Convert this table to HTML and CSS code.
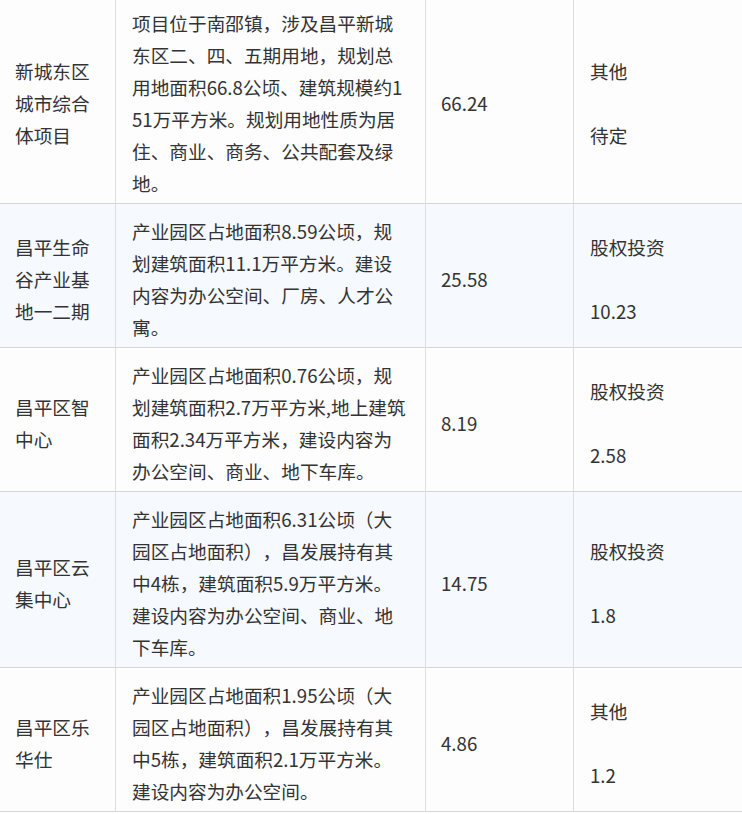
FILE: index.html
```html
<!DOCTYPE html>
<html lang="zh-CN">
<head>
<meta charset="utf-8">
<title>项目列表</title>
<link rel="stylesheet" href="styles.css">
</head>
<body>
<table class="projects">
  <colgroup>
    <col class="c-name">
    <col class="c-desc">
    <col class="c-num">
    <col class="c-type">
  </colgroup>
  <tbody>
    <tr class="row">
      <td class="name">新城东区城市综合体项目</td>
      <td class="desc">项目位于南邵镇，涉及昌平新城东区二、四、五期用地，规划总用地面积66.8公顷、建筑规模约151万平方米。规划用地性质为居住、商业、商务、公共配套及绿地。</td>
      <td class="num">66.24</td>
      <td class="type"><p>其他</p><p>待定</p></td>
    </tr>
    <tr class="row alt">
      <td class="name">昌平生命谷产业基地一二期</td>
      <td class="desc">产业园区占地面积8.59公顷，规划建筑面积11.1万平方米。建设内容为办公空间、厂房、人才公寓。</td>
      <td class="num">25.58</td>
      <td class="type"><p>股权投资</p><p>10.23</p></td>
    </tr>
    <tr class="row">
      <td class="name">昌平区智中心</td>
      <td class="desc">产业园区占地面积0.76公顷，规划建筑面积2.7万平方米,地上建筑面积2.34万平方米，建设内容为办公空间、商业、地下车库。</td>
      <td class="num">8.19</td>
      <td class="type"><p>股权投资</p><p>2.58</p></td>
    </tr>
    <tr class="row alt">
      <td class="name">昌平区云集中心</td>
      <td class="desc">产业园区占地面积6.31公顷（大园区占地面积），昌发展持有其中4栋，建筑面积5.9万平方米。建设内容为办公空间、商业、地下车库。</td>
      <td class="num">14.75</td>
      <td class="type"><p>股权投资</p><p>1.8</p></td>
    </tr>
    <tr class="row">
      <td class="name">昌平区乐华仕</td>
      <td class="desc">产业园区占地面积1.95公顷（大园区占地面积），昌发展持有其中5栋，建筑面积2.1万平方米。建设内容为办公空间。</td>
      <td class="num">4.86</td>
      <td class="type"><p>其他</p><p>1.2</p></td>
    </tr>
  </tbody>
</table>
</body>
</html>
```

FILE: styles.css
```css
html, body {
  margin: 0;
  padding: 0;
  background: #fdfdfd;
}

body {
  font-family: "Noto Sans CJK SC", "Noto Sans", sans-serif;
  font-size: 18.67px;
  line-height: 32px;
  color: #333;
  overflow: hidden;
}

.projects {
  width: 742px;
  margin-top: -4px;
  table-layout: fixed;
  border-collapse: separate;
  border-spacing: 0;
}

.c-name { width: 116px; }
.c-desc { width: 310px; }
.c-num  { width: 148px; }
.c-type { width: 168px; }

.projects td {
  box-sizing: border-box;
  vertical-align: middle;
  text-align: left;
  padding: 11px 15px 4px 15px;
  border-bottom: 1px solid #d6d6d6;
  border-right: 1px solid #dcdee1;
  word-break: break-all;
  text-spacing-trim: space-all;
  background: #fdfdfd;
}

.projects td.type {
  border-right: none;
  padding-left: 16px;
}

.projects td.desc {
  padding-left: 16px;
  padding-right: 16px;
}

.row.alt td {
  background: #f6f9fd;
}

.type p {
  margin: 0;
}

.type p + p {
  margin-top: 32px;
}
```
